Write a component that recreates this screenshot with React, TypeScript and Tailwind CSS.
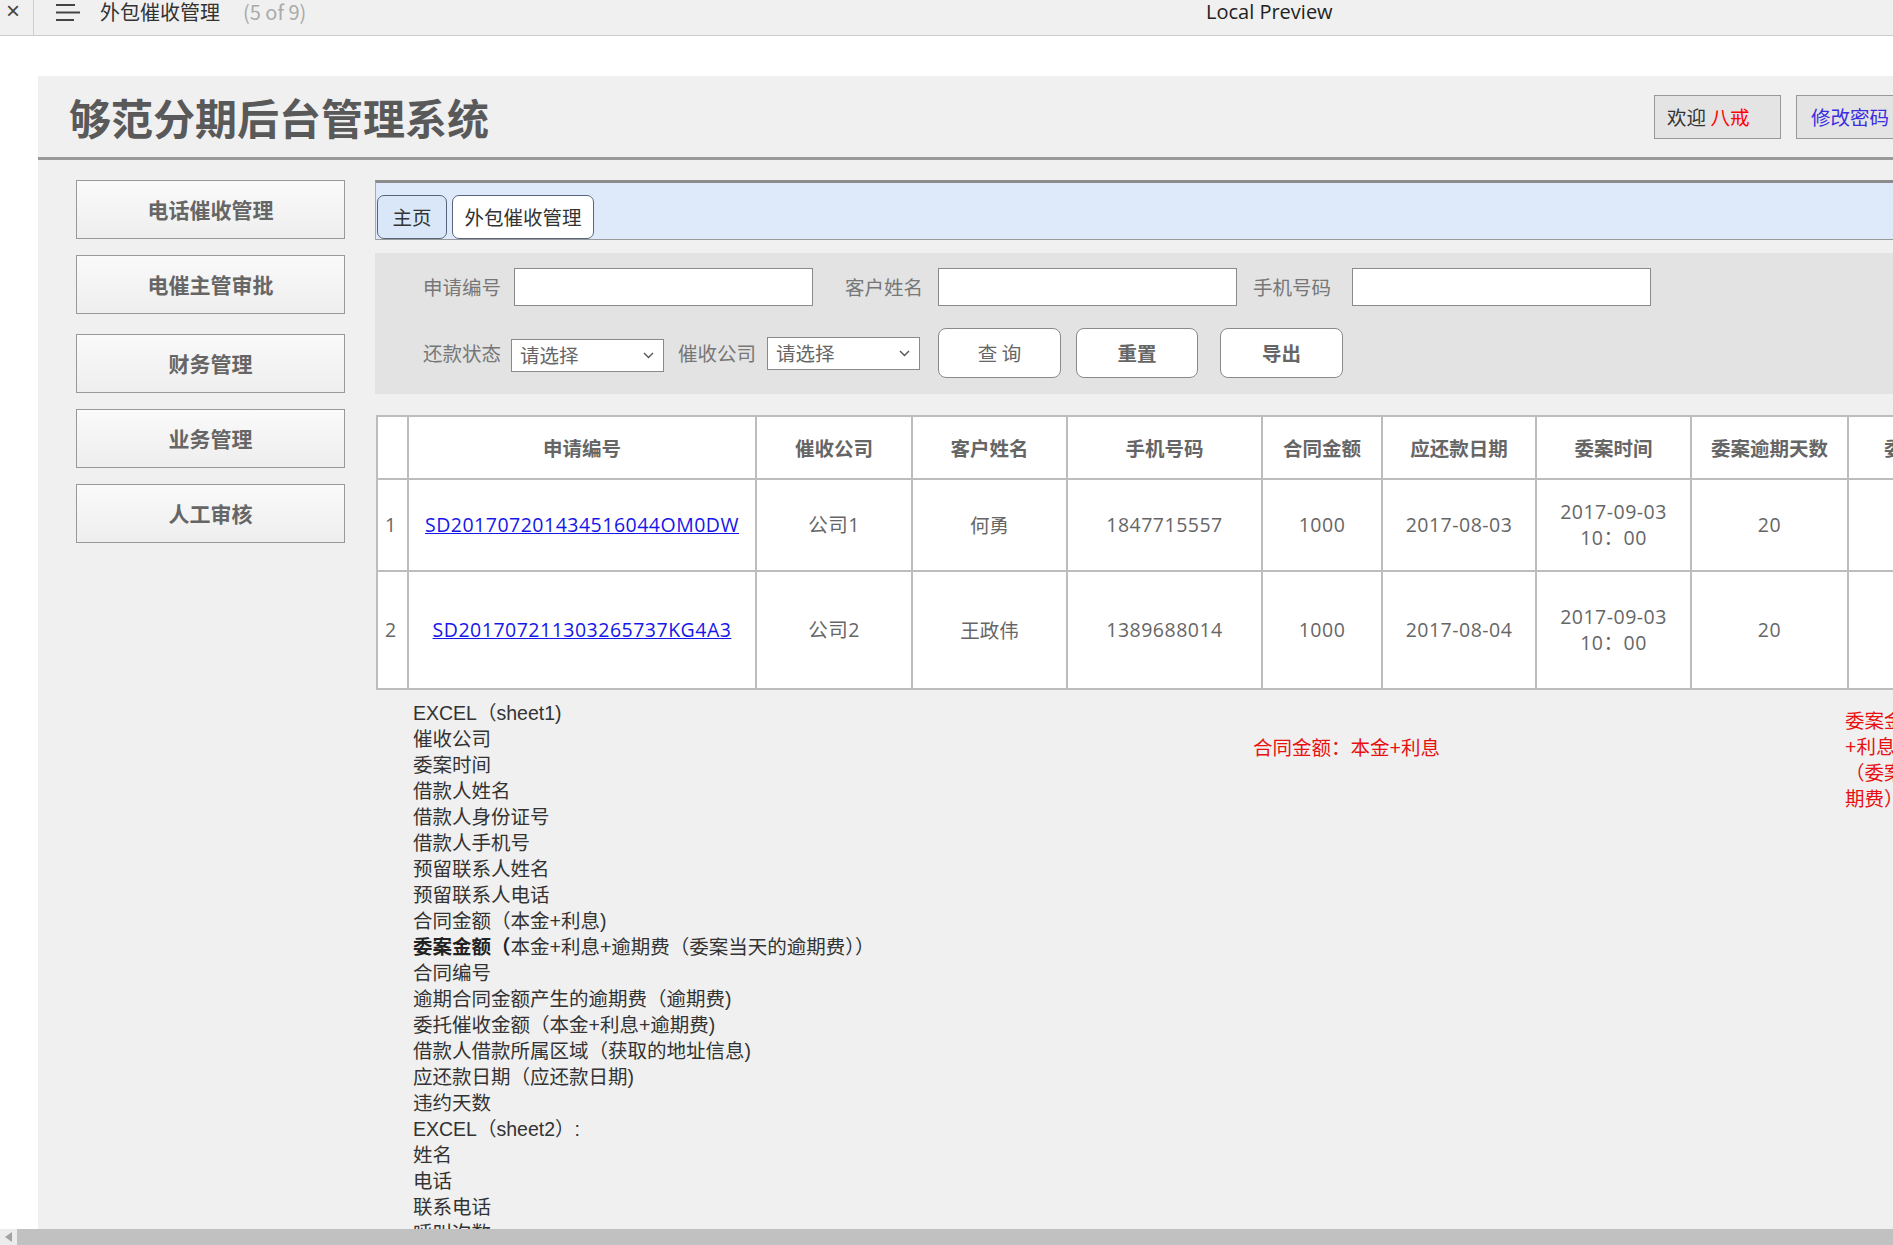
import type { ReactNode } from "react";

const NAV = ["电话催收管理", "电催主管审批", "财务管理", "业务管理", "人工审核"];

const HEAD = [
  "",
  "申请编号",
  "催收公司",
  "客户姓名",
  "手机号码",
  "合同金额",
  "应还款日期",
  "委案时间",
  "委案逾期天数",
  "委案金额",
];

const ROWS = [
  {
    no: "SD201707201434516044OM0DW",
    company: "公司1",
    name: "何勇",
    phone: "1847715557",
    amount: "1000",
    due: "2017-08-03",
    date: "2017-09-03",
    time: "10：00",
    days: "20",
    entrust: "1200",
    tall: false,
  },
  {
    no: "SD201707211303265737KG4A3",
    company: "公司2",
    name: "王政伟",
    phone: "1389688014",
    amount: "1000",
    due: "2017-08-04",
    date: "2017-09-03",
    time: "10：00",
    days: "20",
    entrust: "1200",
    tall: true,
  },
];

const NOTES: ReactNode[] = [
  "EXCEL（sheet1)",
  "催收公司",
  "委案时间",
  "借款人姓名",
  "借款人身份证号",
  "借款人手机号",
  "预留联系人姓名",
  "预留联系人电话",
  "合同金额（本金+利息)",
  <>
    <b className="text-[#222]">委案金额（</b>本金+利息+逾期费（委案当天的逾期费））
  </>,
  "合同编号",
  "逾期合同金额产生的逾期费（逾期费)",
  "委托催收金额（本金+利息+逾期费)",
  "借款人借款所属区域（获取的地址信息)",
  "应还款日期（应还款日期)",
  "违约天数",
  "EXCEL（sheet2）:",
  "姓名",
  "电话",
  "联系电话",
  "呼叫次数",
];

function Select() {
  return (
    <div className="w-[153px] h-[33px] shrink-0 border border-[#8a8a8a] bg-white flex items-center justify-between pl-[8px] pr-[9px] text-[19.5px] text-[#666]">
      <span>请选择</span>
      <svg width="11" height="7" viewBox="0 0 11 7">
        <path d="M1 1l4.5 4.5L10 1" fill="none" stroke="#555" strokeWidth="1.4" />
      </svg>
    </div>
  );
}

const cell = "border-2 border-[#bdbdbd] text-center align-middle";
const num = "font-['Open_Sans','Noto_Sans_CJK_SC',sans-serif] tracking-[0.5px]";

export default function App() {
  return (
    <div className="w-[1893px] h-[1245px] overflow-hidden flex flex-col bg-white font-['Noto_Sans_CJK_SC',sans-serif] text-[#333]">
      {/* window bar */}
      <div className="h-[36px] shrink-0 flex items-start bg-[#f0f0f0] border-b border-[#cdcdcd]">
        <div className="w-[1206px] h-full shrink-0 flex items-start">
          <span className="w-[34px] h-full shrink-0 border-r border-[#cdcdcd] pl-[6px] pt-[1px] font-['Liberation_Sans',sans-serif] text-[24px] leading-[20px] text-[#444]">
            ×
          </span>
          <svg className="ml-[21px] mt-[3px]" width="26" height="18" viewBox="0 0 26 18">
            <path d="M1 2h19M1 9.5h24M1 17h18" stroke="#444" strokeWidth="2.2" />
          </svg>
          <span className="ml-[19px] pt-[1px] text-[20px] leading-[21px] text-[#333]">外包催收管理</span>
          <span className="ml-[23px] pt-[1px] text-[20px] leading-[21px] text-[#aaa]">(5 of 9)</span>
        </div>
        <span className="pt-[1px] font-['Open_Sans',sans-serif] text-[20px] leading-[21px] text-[#222]">
          Local Preview
        </span>
      </div>

      <div className="h-[40px] shrink-0" />

      <div className="flex-1 min-h-0 flex">
        <div className="w-[38px] shrink-0" />
        <div className="w-[2200px] shrink-0 bg-[#f0f0f0] flex flex-col">
          {/* header */}
          <header className="h-[84px] shrink-0 flex items-center border-b-[3px] border-[#999] pl-[31px]">
            <div className="w-[1585px] shrink-0 text-[42px] leading-none font-bold text-[#595959]">
              够范分期后台管理系统
            </div>
            <div className="w-[127px] h-[44px] shrink-0 border border-[#999] bg-[#e4e4e4] pl-[12px] flex items-center text-[19.5px] text-[#333]">
              欢迎&nbsp;<span className="text-[#f00]">八戒</span>
            </div>
            <div className="ml-[15px] w-[127px] h-[44px] shrink-0 border border-[#999] bg-[#e4e4e4] pl-[14px] flex items-center text-[19.5px] text-[#3a2ee0]">
              修改密码
            </div>
          </header>

          <div className="flex pt-[20px]">
            {/* sidebar */}
            <nav className="ml-[38px] w-[269px] shrink-0 flex flex-col gap-[16px]">
              {NAV.map((n, i) => (
                <div
                  key={n}
                  className={`${i === 2 ? "mt-[4px]" : ""} h-[59px] shrink-0 border border-[#999] bg-gradient-to-b from-[#fafafa] to-[#eeeeee] flex items-center justify-center text-[21px] font-bold text-[#666]`}
                >
                  {n}
                </div>
              ))}
            </nav>

            {/* content */}
            <main className="ml-[30px] flex-1 flex flex-col">
              <div className="h-[60px] border-t-[3px] border-t-[#8c8c8c] border-b border-b-[#9a9a9a] border-l border-l-[#aaa] bg-[#deeafa] flex items-end gap-[5px] pl-[1px]">
                <div className="w-[70px] h-[44px] rounded-[7px] border border-[#56677d] bg-[#d9e7f8] flex items-center justify-center text-[19.5px] text-[#333]">
                  主页
                </div>
                <div className="w-[142px] h-[44px] rounded-[7px] border border-[#56677d] bg-white flex items-center justify-center text-[19.5px] text-[#333]">
                  外包催收管理
                </div>
              </div>

              {/* search */}
              <div className="mt-[13px] h-[141px] bg-[#e3e3e3] pl-[48px] pt-[15px] flex flex-col text-[19.5px] text-[#777]">
                <div className="h-[38px] flex items-center">
                  <span className="w-[78px] shrink-0 whitespace-nowrap">申请编号</span>
                  <input className="ml-[13px] w-[299px] h-[38px] border border-[#8a8a8a] bg-white" />
                  <span className="ml-[32px] w-[78px] shrink-0 whitespace-nowrap">客户姓名</span>
                  <input className="ml-[15px] w-[299px] h-[38px] border border-[#8a8a8a] bg-white" />
                  <span className="ml-[16px] w-[78px] shrink-0 whitespace-nowrap">手机号码</span>
                  <input className="ml-[21px] w-[299px] h-[38px] border border-[#8a8a8a] bg-white" />
                </div>
                <div className="mt-[22px] h-[50px] flex items-center">
                  <span className="w-[78px] shrink-0 whitespace-nowrap">还款状态</span>
                  <div className="ml-[10px] mt-[4px]">
                    <Select />
                  </div>
                  <span className="ml-[14px] w-[78px] shrink-0 whitespace-nowrap">催收公司</span>
                  <div className="ml-[11px]">
                    <Select />
                  </div>
                  <button className="ml-[18px] w-[123px] h-[50px] rounded-[8px] border border-[#8a8a8a] bg-white text-[#666]">
                    查&nbsp;询
                  </button>
                  <button className="ml-[15px] w-[122px] h-[50px] rounded-[8px] border border-[#8a8a8a] bg-white font-bold text-[#666]">
                    重置
                  </button>
                  <button className="ml-[22px] w-[123px] h-[50px] rounded-[8px] border border-[#8a8a8a] bg-white font-bold text-[#666]">
                    导出
                  </button>
                </div>
              </div>

              {/* table */}
              <table className="mt-[21px] ml-[1px] table-fixed w-[1621px] border-collapse bg-white text-[19.5px] text-[#666]">
                <colgroup>
                  <col className="w-[31px]" />
                  <col className="w-[348px]" />
                  <col className="w-[156px]" />
                  <col className="w-[155px]" />
                  <col className="w-[195px]" />
                  <col className="w-[120px]" />
                  <col className="w-[154px]" />
                  <col className="w-[155px]" />
                  <col className="w-[157px]" />
                  <col className="w-[150px]" />
                </colgroup>
                <thead>
                  <tr className="h-[63px]">
                    {HEAD.map((h, i) => (
                      <th key={i} className={`${cell} font-bold text-[#666] whitespace-nowrap`}>
                        {h}
                      </th>
                    ))}
                  </tr>
                </thead>
                <tbody>
                  {ROWS.map((r, i) => (
                    <tr key={r.no} className={r.tall ? "h-[118px]" : "h-[92px]"}>
                      <td className={`border-2 border-[#bdbdbd] align-middle pl-[7px] ${num}`}>{i + 1}</td>
                      <td className={`${cell} ${num}`}>
                        <a className="text-[#1616e8] underline" href="#">
                          {r.no}
                        </a>
                      </td>
                      <td className={`${cell} ${num}`}>{r.company}</td>
                      <td className={cell}>{r.name}</td>
                      <td className={`${cell} ${num}`}>{r.phone}</td>
                      <td className={`${cell} ${num}`}>{r.amount}</td>
                      <td className={`${cell} ${num}`}>{r.due}</td>
                      <td className={`${cell} ${num} leading-[26px]`}>
                        <div>{r.date}</div>
                        <div>{r.time}</div>
                      </td>
                      <td className={`${cell} ${num}`}>{r.days}</td>
                      <td className={`${cell} ${num}`}>{r.entrust}</td>
                    </tr>
                  ))}
                </tbody>
              </table>

              {/* notes */}
              <div className="flex pt-[10px] pl-[38px] font-['Liberation_Sans','Noto_Sans_CJK_SC',sans-serif] text-[19.5px] leading-[26px]">
                <div className="w-[840px] shrink-0 text-[#333]">
                  {NOTES.map((n, i) => (
                    <div key={i} className="whitespace-nowrap">
                      {n}
                    </div>
                  ))}
                </div>
                <div className="w-[592px] shrink-0 mt-[35px] text-[#e81010] whitespace-nowrap">
                  合同金额：本金+利息
                </div>
                <div className="mt-[8px] text-[#e81010] whitespace-nowrap">
                  委案金额：本金
                  <br />
                  +利息+逾期费
                  <br />
                  （委案当天的逾
                  <br />
                  期费）
                </div>
              </div>
            </main>
          </div>
        </div>
      </div>

      {/* horizontal scrollbar */}
      <div className="h-[16px] shrink-0 flex">
        <div className="w-[17px] bg-[#ececec] flex items-center justify-center">
          <svg width="8" height="10" viewBox="0 0 8 10">
            <path d="M7 0v10L0 5z" fill="#a3a3a3" />
          </svg>
        </div>
        <div className="flex-1 bg-[#c1c1c1]" />
      </div>
    </div>
  );
}
